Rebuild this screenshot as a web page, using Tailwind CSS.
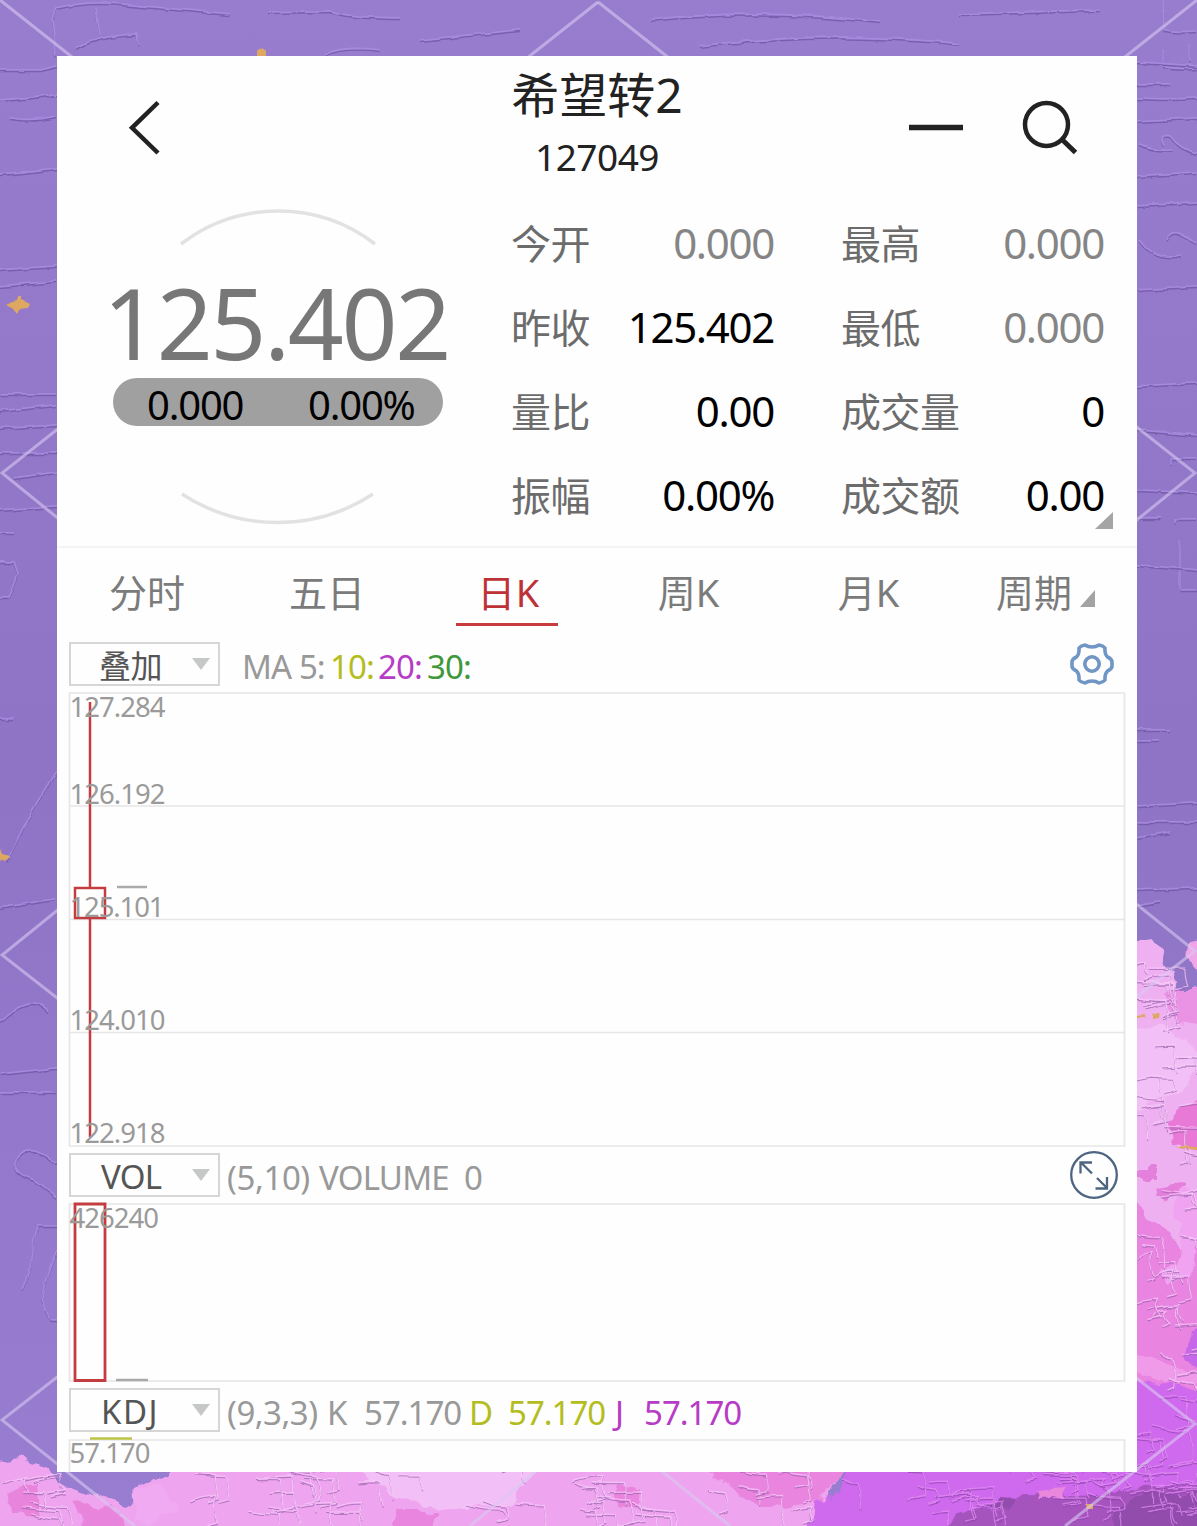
<!DOCTYPE html>
<html lang="zh-CN">
<head>
    <meta charset="UTF-8">
    <meta name="viewport" content="width=device-width, initial-scale=1.0">
    <title>希望转2 127049</title>
    <script src="https://cdn.jsdelivr.net/npm/@tailwindcss/browser@4"></script>
</head>
<body class="relative w-[1197px] h-[1526px] overflow-hidden bg-[#967acd] font-['Noto_Sans','Noto_Sans_CJK_SC',sans-serif]">

    <!-- Painted backdrop -->
    <svg class="absolute inset-0" width="1197" height="1526" viewBox="0 0 1197 1526" fill="none">
        <defs>
            <filter id="rough" x="0" y="0" width="1197" height="1526" filterUnits="userSpaceOnUse" color-interpolation-filters="sRGB">
                <feTurbulence type="fractalNoise" baseFrequency="0.05" numOctaves="3" seed="4" result="n"/>
                <feDisplacementMap in="SourceGraphic" in2="n" scale="16" xChannelSelector="R" yChannelSelector="G"/>
            </filter>
            <filter id="ridge" x="0" y="0" width="1197" height="1526" filterUnits="userSpaceOnUse" color-interpolation-filters="sRGB">
                <feTurbulence type="fractalNoise" baseFrequency="0.06" numOctaves="2" seed="9" result="n"/>
                <feDisplacementMap in="SourceGraphic" in2="n" scale="5" xChannelSelector="R" yChannelSelector="G"/>
            </filter>
            <linearGradient id="base" x1="0" y1="0" x2="0" y2="1">
                <stop offset="0" stop-color="#987dce"/>
                <stop offset="0.5" stop-color="#8f74c6"/>
                <stop offset="1" stop-color="#987dd0"/>
            </linearGradient>
        </defs>
        <rect width="1197" height="1526" fill="url(#base)"/>
        <g id="ridges" filter="url(#ridge)" opacity="0.75"></g>
        <g filter="url(#rough)">
            <path d="M1130 945L1150 938L1168 965L1178 980L1172 998L1210 1000V1540H1130Z" fill="#efb0f2"/>
            <path d="M1192 942Q1180 950 1190 968L1210 975V938Z" fill="#efa5e8"/>
            <path d="M1165 990H1210V1026L1178 1022Z" fill="#ea93e4"/>
            <path d="M1130 1030L1160 1025L1210 1060L1180 1090L1130 1110Z" fill="#f2bff6"/>
            <path d="M1176 1108L1210 1095V1148L1170 1145Z" fill="#e879d6"/>
            <path d="M1130 1168H1155V1178H1130ZM1155 1188L1182 1184V1196L1157 1198Z" fill="#e480dc"/>
            <path d="M1130 1195L1160 1230L1180 1245L1210 1230V1400H1130Z" fill="#e984e0"/>
            <path d="M1180 1190Q1168 1210 1182 1225L1178 1265L1163 1270L1166 1283L1190 1275L1200 1240L1210 1190Z" fill="#efa3f0"/>
            <path d="M1130 1350L1165 1362L1210 1376V1385L1165 1382L1130 1372Z" fill="#f09bea"/>
            <path d="M1190 1330L1210 1325V1370L1185 1362Z" fill="#c768e8"/>
            <path d="M1130 1380L1180 1385L1210 1405V1540H1130Z" fill="#cf6aee"/>
            <path d="M-10 1462L20 1458L50 1470L58 1484L90 1494L125 1506L140 1486L165 1476L175 1464H850L830 1490L810 1540H-10Z" fill="#eea4ee"/>
            <path d="M8 1490L36 1486L40 1515L10 1516ZM70 1500L120 1510L130 1540L90 1535Z" fill="#e884dc"/>
            <path d="M130 1492L165 1486L180 1510L140 1524Z" fill="#efaaf1"/>
            <path d="M350 1465H540L510 1505L440 1510L390 1495Z" fill="#f3bff7"/>
            <path d="M395 1512H435V1530H395ZM615 1485L640 1488L638 1510L616 1505ZM700 1465L850 1465L820 1500L760 1510Z" fill="#e985df"/>
            <path d="M850 1465H1210V1540H805L812 1502L840 1495Z" fill="#cf6aee"/>
            <path d="M930 1540L955 1514L1000 1508L1030 1492L1100 1494L1140 1488L1210 1486V1540Z" fill="#a553bd"/>
            <path d="M985 1505L1000 1498L1015 1500L1008 1508ZM1105 1540L1115 1510L1140 1495L1210 1492V1540Z" fill="#924cac"/>
            <path d="M1037 1490L1062 1487V1497L1039 1499Z" fill="#ea86dc"/>
        </g>
        <g id="strokes" filter="url(#ridge)" opacity="0.7"></g>
        <g filter="url(#ridge)" fill="#dfa860">
            <path d="M6 304L12 301L17 300V297H21V300L29 304L27 308L20 309L18 313L15 309Z"/>
            <path d="M258 58V51Q262 46 266 51V58Z"/>
            <path d="M0 849L2 854L10 856L9 859L2 860L0 863Z"/>
            <path d="M1152 1014L1160 1011L1159 1017L1152 1018ZM1137 1016L1146 1015V1018H1137ZM1177 1146L1197 1147V1150L1177 1148ZM1086 1504H1093V1510H1087Z"/>
        </g>
        <!-- Diamond lattice -->
        <g stroke="#d9c9f2" stroke-opacity="0.6" stroke-width="3">
            <path d="M0 0L598 473L1195 951L598 1420L470 1526"/>
            <path d="M1197 0L598 473L2 955L598 1420L730 1526"/>
            <path d="M598 2L2 473L598 955L1195 1424L1065 1526"/>
            <path d="M598 2L1195 473L598 955L2 1420L135 1526"/>
        </g>
    </svg>

    <main class="relative mx-[57px] mt-14 w-[1080px] h-[1416px] overflow-hidden bg-[#fefefe]">

        <!-- Header -->
        <header class="flex h-[144px] items-start justify-between text-[#222]">
            <svg class="ml-[66px] mt-[42px]" width="44" height="60" viewBox="0 0 44 60" fill="none" stroke="currentColor" stroke-width="4.5">
                <path d="M35 4.500L9 29.800L35 55"/>
            </svg>
            <div class="ml-[343px] w-[174px] text-center">
                <h1 class="mt-[7px] h-[64px] text-[48px] leading-[64px] whitespace-nowrap">希望转2</h1>
                <p class="mt-[5px] text-[37px] leading-[50px] tracking-[-0.5px]">127049</p>
            </div>
            <svg class="ml-auto mr-[53px] mt-[42px]" width="182" height="60" viewBox="0 0 182 60" fill="none" stroke="currentColor">
                <path d="M7 29.500H61" stroke-width="5.500"/>
                <circle cx="144.500" cy="26.500" r="21.500" stroke-width="4.500"/>
                <path d="M159.500 41L173.500 54.500" stroke-width="5"/>
            </svg>
        </header>

        <!-- Quote -->
        <section class="flex h-[346px]">
            <div class="relative w-[454px]">
                <svg class="absolute left-0 top-0" width="454" height="346" viewBox="0 0 454 346" fill="none" stroke="#e2e2e2" stroke-width="3.500">
                    <path d="M124 44A159 159 0 0 1 318 44"/>
                    <path d="M125 294A174 174 0 0 0 316 294"/>
                </svg>
                <div class="ml-[46px] mt-[68px] h-[110px] text-[98px] leading-[108px] tracking-[-2.4px] text-[#777]">125.402</div>
                <div class="relative ml-[56px] flex h-[48px] w-[330px] items-center rounded-full bg-[#a0a0a0] pl-[34px] text-[40px] leading-[48px] tracking-[-1.2px] text-black">
                    <span class="mt-[6px] w-[161px]">0.000</span>
                    <span class="mt-[6px]">0.00%</span>
                </div>
            </div>
            <dl class="mt-[2px] grid h-[336px] grid-cols-[79px_184px_67px_120px_143px] grid-rows-4 items-center text-[42px] leading-[60px] tracking-[-1.3px] text-black [&>dt]:text-[40px] [&>dt]:tracking-[-0.5px] [&>dt]:text-[#6c6c6c] [&>dt]:whitespace-nowrap [&>dd]:text-right [&>dd]:pb-[2px]">
                <dt>今开</dt><dd class="text-[#858585]">0.000</dd><i></i><dt>最高</dt><dd class="text-[#858585]">0.000</dd>
                <dt>昨收</dt><dd>125.402</dd><i></i><dt>最低</dt><dd class="text-[#858585]">0.000</dd>
                <dt>量比</dt><dd>0.00</dd><i></i><dt>成交量</dt><dd>0</dd>
                <dt>振幅</dt><dd>0.00%</dd><i></i><dt>成交额</dt><dd>0.00</dd>
            </dl>
            <svg class="-ml-[9px] mt-[312px]" width="18" height="17"><path d="M18 0V17H0Z" fill="#a5a5a5"/></svg>
        </section>

        <!-- Period tabs -->
        <nav class="grid h-[89px] grid-cols-6 border-t-2 border-[#f4f4f4] text-center text-[38px] leading-[56px] text-[#7b7b7b]">
            <a class="pt-[16px]">分时</a>
            <a class="pt-[16px]">五日</a>
            <a class="flex flex-col items-center pt-[16px] text-[#bd3236]"><span class="pl-[3px] tracking-[0.5px]">日K</span><span class="mt-[3px] h-[3px] w-[102px] bg-[#c93a3c]"></span></a>
            <a class="pt-[16px] pl-[3px]">周K</a>
            <a class="pt-[16px] pl-[3px]">月K</a>
            <a class="flex items-end justify-center gap-[8px] self-start pt-[16px] pr-[3px]">周期<svg class="mb-[13px]" width="15" height="17"><path d="M15 0V17H0Z" fill="#a3a3a3"/></svg></a>
        </nav>

        <!-- Main chart -->
        <div class="ml-3 mt-[7px] flex h-[44px] items-center">
            <div class="flex h-[44px] w-[151px] items-center border-2 border-[#d6d6d6] pl-[28px] text-[32px] leading-[40px] tracking-[-0.5px] text-[#555]">
                <span class="mt-1">叠加</span><svg class="ml-auto mr-[8px]" width="18" height="12"><path d="M0 0H18L9 12Z" fill="#c6c8c8"/></svg>
            </div>
            <div class="ml-[22px] mt-[5px] flex text-[33px] leading-[44px] tracking-[-0.9px] text-[#999]">
                <span class="w-[88px] whitespace-nowrap">MA 5:</span>
                <span class="w-[48px] text-[#b4bd20]">10:</span>
                <span class="w-[49px] text-[#b63cc6]">20:</span>
                <span class="text-[#40983a]">30:</span>
            </div>
            <svg class="ml-auto mr-[22px]" width="46" height="46" viewBox="-23 -23 46 46" fill="none" stroke="#6f96c4" stroke-width="3.600" stroke-linejoin="round">
                <path d="M-7 -19Q-4 -17 0 -17Q4 -17 7 -19Q11 -18.500 13 -16Q12.500 -10 15.500 -7Q20 -5 20 -2V2Q20 5 15.500 7Q12.500 10 13 16Q11 18.500 7 19Q4 17 0 17Q-4 17 -7 19Q-11 18.500 -13 16Q-12.500 10 -15.500 7Q-20 5 -20 2V-2Q-20 -5 -15.500 -7Q-12.500 -10 -13 -16Q-11 -18.500 -7 -19Z"/>
                <circle r="7.200"/>
            </svg>
        </div>
        <svg class="ml-3 mt-[5px] block overflow-visible" width="1058" height="458" viewBox="69 691 1058 458" fill="none">
            <path d="M69.500 693H1124.500V1146H69.500ZM69 806H1125M69 919.500H1125M69 1032.500H1125" stroke="#e6e6e6" stroke-width="1.700"/>
            <path d="M90 702V888M90 918V1137M75 888H105V918H75Z" stroke="#c53c40" stroke-width="2.500"/>
            <path d="M117 887H147" stroke="#aaa" stroke-width="2.500"/>
            <g fill="#9a9a9a" font-size="27.500">
                <text x="69.500" y="717" textLength="96">127.284</text>
                <text x="69.500" y="804" textLength="96">126.192</text>
                <text x="69.500" y="917" textLength="95">125.101</text>
                <text x="69.500" y="1030" textLength="96">124.010</text>
                <text x="69.500" y="1143" textLength="96">122.918</text>
            </g>
        </svg>

        <!-- Volume -->
        <div class="ml-3 mt-1 flex h-[44px] items-center">
            <div class="flex h-[44px] w-[151px] items-center border-2 border-[#d6d6d6] pl-[30px] text-[33px] leading-[40px] tracking-[-0.8px] text-[#555]">
                <span class="mt-1">VOL</span><svg class="ml-auto mr-[8px]" width="18" height="12"><path d="M0 0H18L9 12Z" fill="#c6c8c8"/></svg>
            </div>
            <div class="ml-[7px] mt-[5px] flex text-[33px] leading-[44px] text-[#999]">
                <span class="w-[92px] tracking-[-0.4px]">(5,10)</span>
                <span class="w-[145px] tracking-[-0.8px]">VOLUME</span>
                <span>0</span>
            </div>
            <svg class="ml-auto mr-[18px]" width="50" height="50" viewBox="-25 -25 50 50" fill="none" stroke="#4d6580" stroke-width="2.300">
                <circle r="22.800"/>
                <path d="M-2 -1.500L-13 -12.500M-13.500 -1.500V-12.500H-2M3 3L13 13M13 2V13.500H1.500"/>
            </svg>
        </div>
        <svg class="ml-3 mt-1 block overflow-visible" width="1058" height="184" viewBox="69 1201 1058 184" fill="none">
            <path d="M69.500 1204H1124.500V1381H69.500Z" stroke="#e6e6e6" stroke-width="1.700"/>
            <path d="M75 1204H105V1380.500H75Z" stroke="#c53c40" stroke-width="2.800"/>
            <path d="M116 1380H148" stroke="#aaa" stroke-width="2.500"/>
            <text x="69.500" y="1228" textLength="89.500" fill="#9a9a9a" font-size="27.500">426240</text>
        </svg>

        <!-- KDJ -->
        <div class="ml-3 mt-[3px] flex h-[44px] items-center">
            <div class="flex h-[44px] w-[151px] items-center border-2 border-[#d6d6d6] pl-[30px] text-[33px] leading-[40px] tracking-[1.500px] text-[#555]">
                <span class="mt-1">KDJ</span><svg class="ml-auto mr-[8px]" width="18" height="12"><path d="M0 0H18L9 12Z" fill="#c6c8c8"/></svg>
            </div>
            <div class="ml-[7px] mt-[5px] flex text-[33px] leading-[44px] tracking-[-1px] text-[#999]">
                <span class="w-[100px] tracking-[-0.5px]">(9,3,3)</span>
                <span class="w-[37px]">K</span>
                <span class="w-[105px]">57.170</span>
                <span class="w-[39px] text-[#b4bd20]">D</span>
                <span class="w-[107px] text-[#b4bd20]">57.170</span>
                <span class="w-[29px] text-[#b63cc6]">J</span>
                <span class="text-[#b63cc6]">57.170</span>
            </div>
        </div>
        <svg class="ml-3 mt-1 block overflow-visible" width="1058" height="36" viewBox="69 1436 1058 36" fill="none">
            <path d="M69.500 1480V1440H1124.500V1480" stroke="#e6e6e6" stroke-width="1.700"/>
            <path d="M90 1438.500H132" stroke="#bcc545" stroke-width="2.500"/>
            <text x="69.500" y="1463" textLength="81" fill="#9a9a9a" font-size="27.500">57.170</text>
        </svg>
    </main>

    <script>
        // Long brush ridges on the purple ground, each one a dark line with a light one above
        const ridges = [
            'M56 56L52 20L56 8Q90 0 130 5L230 14', 'M75 48Q100 36 136 34L138 46', 'M96 8L100 36', 'M268 12L330 11Q350 18 400 18', 'M325 54Q345 46 380 50',
            'M0 70H40L57 66', 'M0 100Q30 98 57 94', 'M10 118Q30 122 57 116', 'M0 174Q25 172 57 168', 'M0 270L57 266', 'M0 286L57 281',
            'M0 394H57', 'M0 411L57 405', 'M0 428L57 424', 'M0 453H57', 'M14 478L57 472', 'M0 510L57 506', 'M0 533H14', 'M0 562H14L18 574L8 598H0',
            'M0 718H14', 'M8 860Q25 820 57 770', 'M0 908L55 899', 'M0 1022Q30 992 48 1012', 'M0 1074L57 1068', 'M0 1092H57', 'M57 1164Q30 1140 16 1160Q10 1172 34 1180L57 1198',
            'M22 1290Q34 1260 33 1245L38 1225H57', 'M57 1250Q44 1280 42 1300L50 1320H57',
            'M1163 0L1164 30Q1180 33 1197 31', 'M1163 50V67Q1180 70 1197 68', 'M1190 44V62', 'M1137 62L1197 66', 'M1137 84H1170', 'M1137 98Q1170 100 1197 98',
            'M1137 121L1197 118', 'M1140 145Q1155 152 1172 150M1165 145Q1158 134 1170 136Q1180 150 1197 153', 'M1137 176L1197 172',
            'M1137 205L1197 202', 'M1140 240Q1155 262 1180 256M1166 240Q1172 228 1184 236L1197 243',
            'M1137 290L1197 287', 'M1137 386L1197 383', 'M1137 430L1197 435', 'M1172 464V459H1197', 'M1137 490L1197 493', 'M1176 524V520H1197', 'M1180 540V590H1197', 'M1137 518L1160 518',
            'M1137 565L1197 570', 'M1137 730H1170M1137 740H1158', 'M1137 806L1197 803', 'M1137 822H1197', 'M1137 838L1170 832',
            'M650 20Q760 8 880 22', 'M700 46Q830 30 960 44', 'M960 14L1100 10', 'M420 40L520 30', 'M1137 890L1197 888', 'M1137 905L1160 901'
        ];
        const line = (d, color, width, dy) =>
            `<path d="${d}" stroke="${color}" stroke-width="${width}" transform="translate(0 ${dy})"/>`;
        document.getElementById('ridges').innerHTML =
            ridges.map(d => line(d, '#6f57a3', 1.4, 1.5) + line(d, '#ad8fe4', 1.6, -0.3)).join('');

        // Palette knife dabs over the pink and violet paint
        let seed = 17;
        const rnd = () => (seed = (seed * 16807) % 2147483647) / 2147483647;
        let dabs = '';
        function dab(x, y, violet) {
            const w = 12 + rnd() * 26, h = 10 + rnd() * 22, s = rnd() * 12 - 6;
            const d = `M${x} ${y}q${w / 2} ${s} ${w} ${s}q${s} ${h / 2} 3 ${h}` + (rnd() > 0.5 ? `l${-w / 2} 3` : '');
            dabs += line(d, violet ? '#8f46ad' : '#9a63ae', 1.1, 1) + line(d, violet ? '#e48ff2' : '#f8cdfa', 1.2, -0.5);
        }
        for (let i = 0; i < 55; i++) {
            const y = 1005 + rnd() * 490;
            dab(1130 + rnd() * 55, y, y > 1385);
        }
        for (let i = 0; i < 75; i++) {
            const x = 165 + rnd() * 1020;
            dab(x, 1466 + rnd() * 50, x > 820);
        }
        for (let i = 0; i < 7; i++) {
            dab(rnd() * 40, 1470 + rnd() * 45, false);
            dab(1132 + rnd() * 18, 955 + rnd() * 50, false);
        }
        document.getElementById('strokes').innerHTML = dabs;
    </script>
</body>
</html>
